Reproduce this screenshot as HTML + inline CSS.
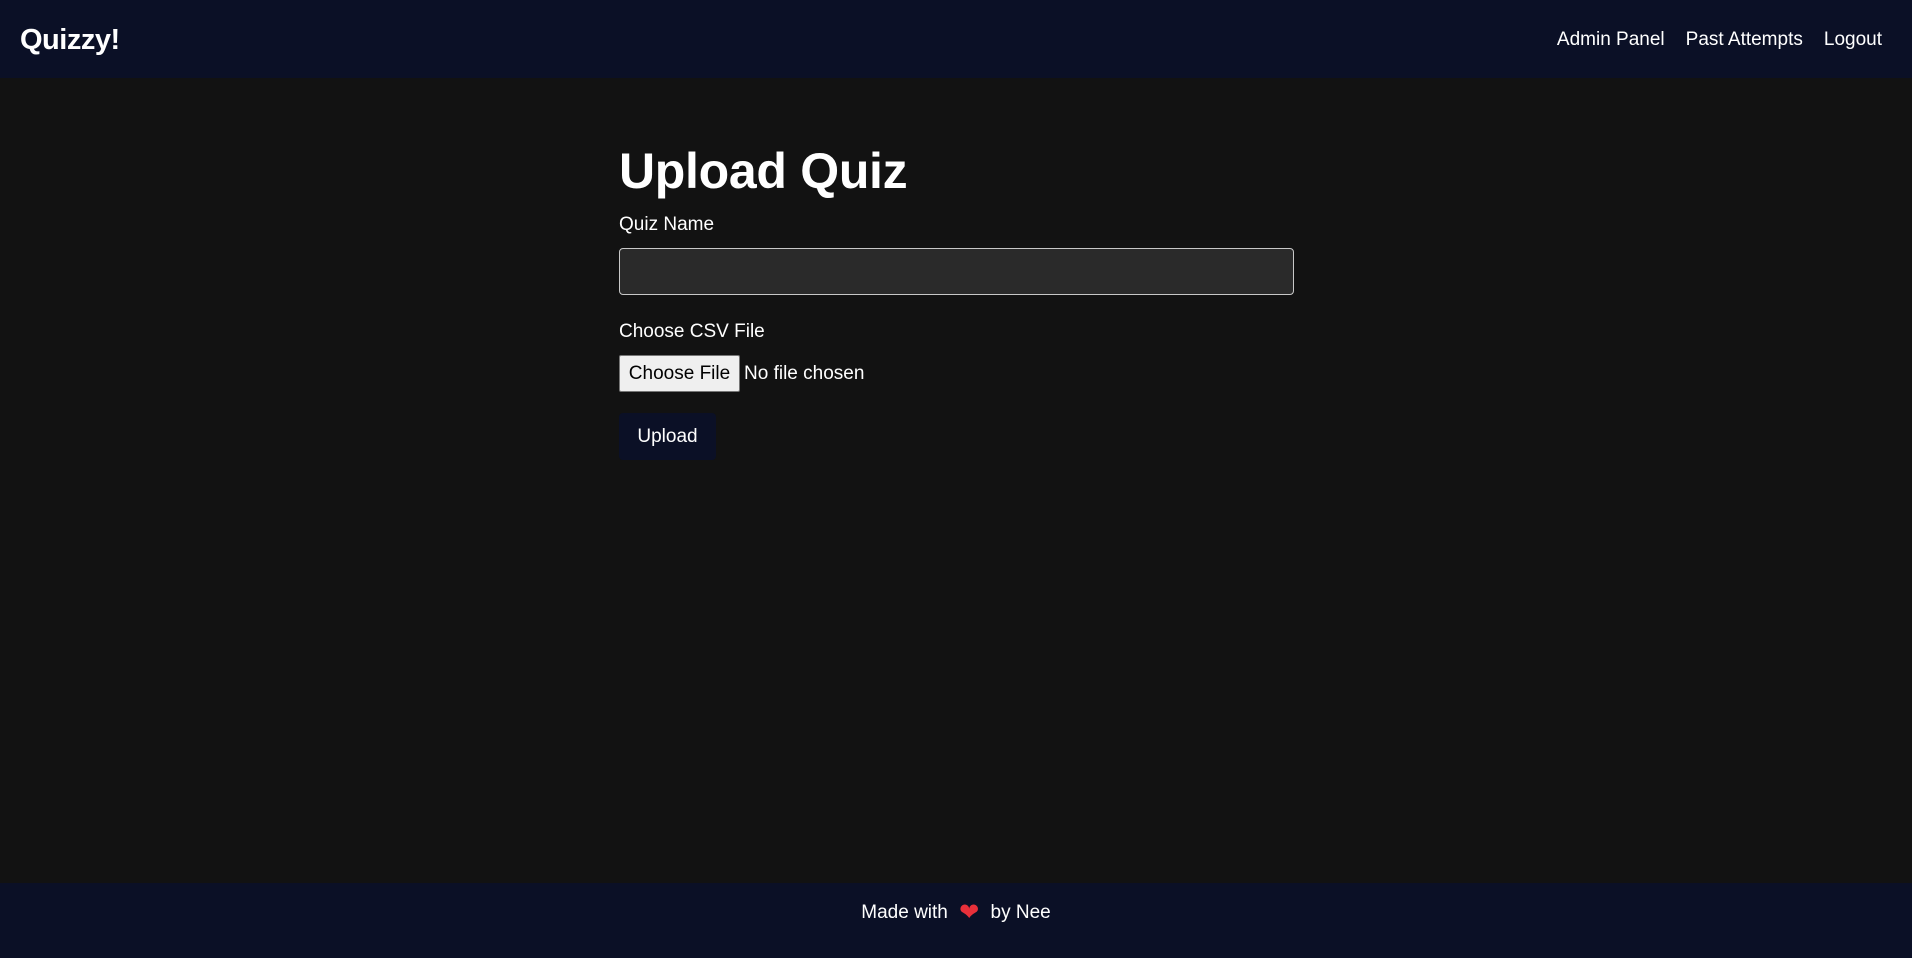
<!DOCTYPE html>
<html><head><meta charset="utf-8"><style>
*{box-sizing:border-box;margin:0;padding:0}
body{width:1912px;height:958px;background:#121212;color:#fff;font-family:"Liberation Sans",sans-serif;position:relative;overflow:hidden}
.hdr{position:absolute;left:0;top:0;width:1912px;height:78px;background:#0b1026}
.logo{position:absolute;left:20px;top:24px;font-size:29px;font-weight:bold;letter-spacing:-0.5px}
.nav{position:absolute;right:30px;top:29px;font-size:19px}
.nav span{margin-left:21px}
h1{position:absolute;left:619px;top:142px;font-size:50px;font-weight:bold;letter-spacing:-0.3px}
.lbl{position:absolute;left:619px;font-size:19px}
.inp{position:absolute;left:619px;top:248px;width:675px;height:47px;background:#2a2a2a;border:1px solid #c8c8c8;border-radius:4px}
.fb{position:absolute;left:619px;top:355px;width:121px;height:37px;background:#efefef;border:1px solid #767676;border-radius:2px;color:#000;font-size:19px;text-align:center;line-height:35px}
.nf{position:absolute;left:744px;top:363px;font-size:19px}
.up{position:absolute;left:619px;top:413px;width:97px;height:47px;background:#0b1026;border-radius:4px;font-size:19px;text-align:center;line-height:47px}
.ftr{position:absolute;left:0;top:883px;width:1912px;height:75px;background:#0b1026;text-align:center;font-size:19px;line-height:60px}
.ht{color:#e8303a;font-size:24px;margin:0 6px;vertical-align:-2px}
</style></head><body>
<div class="hdr"><div class="logo">Quizzy!</div><div class="nav"><span>Admin Panel</span><span>Past Attempts</span><span>Logout</span></div></div>
<h1>Upload Quiz</h1>
<div class="lbl" style="top:214px">Quiz Name</div>
<div class="inp"></div>
<div class="lbl" style="top:321px">Choose CSV File</div>
<div class="fb">Choose File</div>
<div class="nf">No file chosen</div>
<div class="up">Upload</div>
<div class="ftr">Made with <span class="ht">❤</span> by Nee</div>
</body></html>
